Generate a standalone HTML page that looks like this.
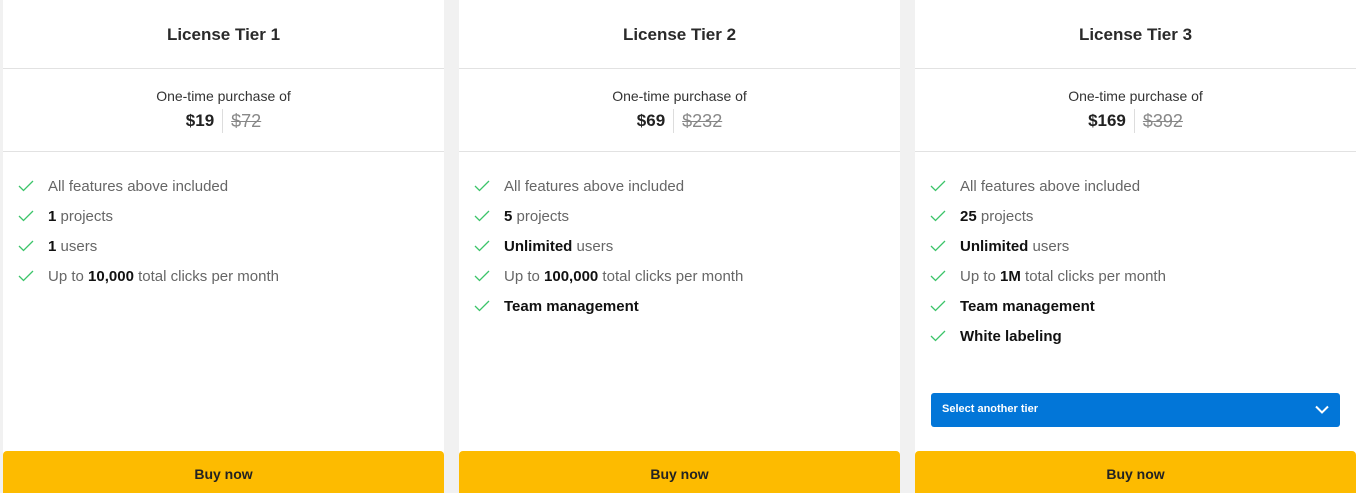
<!DOCTYPE html>
<html><head><style>
*{margin:0;padding:0;box-sizing:border-box}
html,body{width:1356px;height:493px;overflow:hidden}
body{background:#f1f1f1;font-family:"Liberation Sans",sans-serif;position:relative}
.card{position:absolute;top:0;width:441px;height:493px;background:#fff}
.t{height:69px;border-bottom:1px solid #e2e2e2;text-align:center;font-size:17px;font-weight:bold;color:#2a2a2a;line-height:70px}
.p{height:83px;border-bottom:1px solid #e2e2e2;text-align:center;padding-top:19px}
.p .o{font-size:14px;color:#333;line-height:16px}
.p .pr{margin-top:5px;line-height:24px;display:flex;justify-content:center}
.p b{color:#222;font-size:17px;padding-right:8px;border-right:1px solid #ddd}
.p s{color:#888;font-size:18px;padding-left:8px}
ul{list-style:none;padding-top:26px}
li{height:30px;font-size:15px;color:#666;padding-left:45px;position:relative;line-height:18px}
li b{color:#111}
li svg{position:absolute;left:15px;top:2px}
.buy{position:absolute;left:0;top:451px;width:441px;height:42px;background:#fdbb00;border-radius:4px 4px 0 0;text-align:center;line-height:47px;font-weight:bold;font-size:14px;color:#222}
.sel{position:absolute;left:16px;top:393px;width:409px;height:34px;background:#0276d8;border-radius:3px;color:#fff;font-size:11px;font-weight:bold;line-height:33px;padding-left:11px}
.sel svg{position:absolute;right:11px;top:12px}
</style></head><body>
<div class="card" style="left:3px">
<div class="t">License Tier 1</div>
<div class="p"><div class="o">One-time purchase of</div><div class="pr"><b>$19</b><s>$72</s></div></div>
<ul>
<li><svg width="16" height="12" viewBox="0 0 16 12"><path d="M1 6l4.5 4.5L15 1" fill="none" stroke="#3cc46a" stroke-width="1.3"/></svg>All features above included</li>
<li><svg width="16" height="12" viewBox="0 0 16 12"><path d="M1 6l4.5 4.5L15 1" fill="none" stroke="#3cc46a" stroke-width="1.3"/></svg><b>1</b> projects</li>
<li><svg width="16" height="12" viewBox="0 0 16 12"><path d="M1 6l4.5 4.5L15 1" fill="none" stroke="#3cc46a" stroke-width="1.3"/></svg><b>1</b> users</li>
<li><svg width="16" height="12" viewBox="0 0 16 12"><path d="M1 6l4.5 4.5L15 1" fill="none" stroke="#3cc46a" stroke-width="1.3"/></svg>Up to <b>10,000</b> total clicks per month</li>
</ul>
<div class="buy">Buy now</div>
</div>
<div class="card" style="left:459px">
<div class="t">License Tier 2</div>
<div class="p"><div class="o">One-time purchase of</div><div class="pr"><b>$69</b><s>$232</s></div></div>
<ul>
<li><svg width="16" height="12" viewBox="0 0 16 12"><path d="M1 6l4.5 4.5L15 1" fill="none" stroke="#3cc46a" stroke-width="1.3"/></svg>All features above included</li>
<li><svg width="16" height="12" viewBox="0 0 16 12"><path d="M1 6l4.5 4.5L15 1" fill="none" stroke="#3cc46a" stroke-width="1.3"/></svg><b>5</b> projects</li>
<li><svg width="16" height="12" viewBox="0 0 16 12"><path d="M1 6l4.5 4.5L15 1" fill="none" stroke="#3cc46a" stroke-width="1.3"/></svg><b>Unlimited</b> users</li>
<li><svg width="16" height="12" viewBox="0 0 16 12"><path d="M1 6l4.5 4.5L15 1" fill="none" stroke="#3cc46a" stroke-width="1.3"/></svg>Up to <b>100,000</b> total clicks per month</li>
<li><svg width="16" height="12" viewBox="0 0 16 12"><path d="M1 6l4.5 4.5L15 1" fill="none" stroke="#3cc46a" stroke-width="1.3"/></svg><b>Team management</b></li>
</ul>
<div class="buy">Buy now</div>
</div>
<div class="card" style="left:915px">
<div class="t">License Tier 3</div>
<div class="p"><div class="o">One-time purchase of</div><div class="pr"><b>$169</b><s>$392</s></div></div>
<ul>
<li><svg width="16" height="12" viewBox="0 0 16 12"><path d="M1 6l4.5 4.5L15 1" fill="none" stroke="#3cc46a" stroke-width="1.3"/></svg>All features above included</li>
<li><svg width="16" height="12" viewBox="0 0 16 12"><path d="M1 6l4.5 4.5L15 1" fill="none" stroke="#3cc46a" stroke-width="1.3"/></svg><b>25</b> projects</li>
<li><svg width="16" height="12" viewBox="0 0 16 12"><path d="M1 6l4.5 4.5L15 1" fill="none" stroke="#3cc46a" stroke-width="1.3"/></svg><b>Unlimited</b> users</li>
<li><svg width="16" height="12" viewBox="0 0 16 12"><path d="M1 6l4.5 4.5L15 1" fill="none" stroke="#3cc46a" stroke-width="1.3"/></svg>Up to <b>1M</b> total clicks per month</li>
<li><svg width="16" height="12" viewBox="0 0 16 12"><path d="M1 6l4.5 4.5L15 1" fill="none" stroke="#3cc46a" stroke-width="1.3"/></svg><b>Team management</b></li>
<li><svg width="16" height="12" viewBox="0 0 16 12"><path d="M1 6l4.5 4.5L15 1" fill="none" stroke="#3cc46a" stroke-width="1.3"/></svg><b>White labeling</b></li>
</ul>
<div class="sel">Select another tier<svg width="14" height="9" viewBox="0 0 14 9"><path d="M1 1.5l6 6 6-6" fill="none" stroke="#fff" stroke-width="2"/></svg></div>
<div class="buy">Buy now</div>
</div>
</body></html>
